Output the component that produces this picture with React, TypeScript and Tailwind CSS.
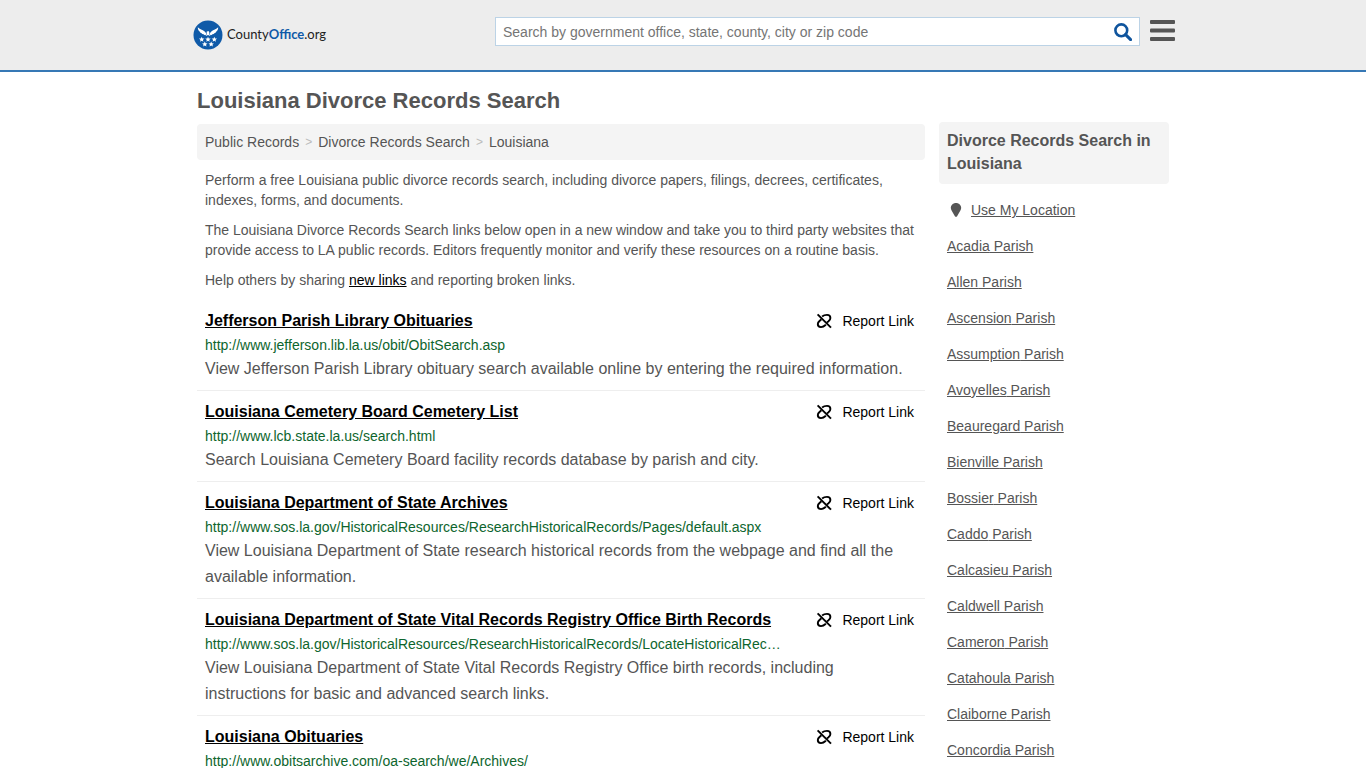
import { FC } from 'react';

interface RecordLink {
  title: string;
  url: string;
  description?: string;
}

const records: RecordLink[] = [
  {
    title: 'Jefferson Parish Library Obituaries',
    url: 'http://www.jefferson.lib.la.us/obit/ObitSearch.asp',
    description: 'View Jefferson Parish Library obituary search available online by entering the required information.',
  },
  {
    title: 'Louisiana Cemetery Board Cemetery List',
    url: 'http://www.lcb.state.la.us/search.html',
    description: 'Search Louisiana Cemetery Board facility records database by parish and city.',
  },
  {
    title: 'Louisiana Department of State Archives',
    url: 'http://www.sos.la.gov/HistoricalResources/ResearchHistoricalRecords/Pages/default.aspx',
    description:
      'View Louisiana Department of State research historical records from the webpage and find all the available information.',
  },
  {
    title: 'Louisiana Department of State Vital Records Registry Office Birth Records',
    url: 'http://www.sos.la.gov/HistoricalResources/ResearchHistoricalRecords/LocateHistoricalRec…',
    description:
      'View Louisiana Department of State Vital Records Registry Office birth records, including instructions for basic and advanced search links.',
  },
  {
    title: 'Louisiana Obituaries',
    url: 'http://www.obitsarchive.com/oa-search/we/Archives/',
  },
];

const parishes = [
  'Acadia',
  'Allen',
  'Ascension',
  'Assumption',
  'Avoyelles',
  'Beauregard',
  'Bienville',
  'Bossier',
  'Caddo',
  'Calcasieu',
  'Caldwell',
  'Cameron',
  'Catahoula',
  'Claiborne',
  'Concordia',
];

const STAR = 'M0-2.7.8-.9 2.7-.8 1.2.5 1.7 2.4 0 1.4-1.7 2.4-1.2.5-2.7-.8-.8-.9Z';

const LogoMark = () => (
  <svg viewBox="0 0 30 30" className="h-[30px] w-[30px]" aria-hidden="true">
    <circle cx="15" cy="15" r="14.5" fill="#0f5aa8" />
    <g fill="#fff">
      {/* eagle: left wing, right wing, body */}
      <path d="M4.8 7.2C6.6 9.2 9.6 9.8 11.4 11.2 12.3 12 12.9 12.8 13.4 13.5L12.6 15.2C11.7 15.2 11 14.8 10.6 14.2 9.7 14.3 9 13.9 8.6 13.2 7.7 13.1 7.1 12.6 6.9 11.8 5.6 10.8 4.8 9.2 4.8 7.2Z" />
      <path d="M25.2 7.2C23.4 9.2 20.4 9.8 18.6 11.2 17.7 12 17.1 12.8 16.6 13.5L17.4 15.2C18.3 15.2 19 14.8 19.4 14.2 20.3 14.3 21 13.9 21.4 13.2 22.3 13.1 22.9 12.6 23.1 11.8 24.4 10.8 25.2 9.2 25.2 7.2Z" />
      <path d="M13.6 11.7 15.3 11.1 16.3 12.1 16.2 13.8 17.2 15.9 15 15.1 12.8 15.9 13.8 13.8Z" />
      <path d={STAR} transform="translate(8.7 19.4)" />
      <path d={STAR} transform="translate(15 19.4)" />
      <path d={STAR} transform="translate(21.3 19.4)" />
      <path d={STAR} transform="translate(11.8 24.2)" />
      <path d={STAR} transform="translate(18.2 24.2)" />
    </g>
  </svg>
);

const SearchIcon = () => (
  <svg viewBox="0 0 18 18" className="h-[18px] w-[18px]" fill="none" stroke="#0f549d" aria-hidden="true">
    <circle cx="7.3" cy="7.3" r="5.9" strokeWidth="2.6" />
    <path d="M11.6 11.6 16.6 16.6" strokeWidth="3" strokeLinecap="round" />
  </svg>
);

const MenuIcon = () => (
  <svg viewBox="0 0 25 22" className="h-[22px] w-[25px]" fill="#555" aria-hidden="true">
    <rect x="0" y="0" width="25" height="4" rx="1" />
    <rect x="0" y="8.5" width="25" height="4" rx="1" />
    <rect x="0" y="17" width="25" height="4" rx="1" />
  </svg>
);

const BrokenLinkIcon = () => (
  <svg viewBox="0 0 16 16" className="h-4 w-4" fill="none" stroke="#000" strokeWidth="1.9" aria-hidden="true">
    <path d="M1.6 1.3 15 14.7" />
    <path d="M6.1 3.6C8 2 9.4 1.9 11 1.9 13 1.9 14.4 3.2 14.4 5.1 14.4 6.5 13.6 7.4 12.5 8.3L11 9.4" />
    <path d="M5.4 6.3 3.5 8C2.4 9 1.8 9.8 1.8 11 1.8 12.9 3.2 14.1 5 14.1 6.6 14.1 7.7 13.7 9.9 11.7" />
  </svg>
);

const PinIcon = () => (
  <svg viewBox="0 0 12 16" className="h-4 w-3" fill="#555" aria-hidden="true">
    <path d="M6 1C3 1 .8 3.2.8 6 .8 8.4 3.4 11.2 4.9 14.2 5.3 15 6.7 15 7.1 14.2 8.6 11.2 11.2 8.4 11.2 6 11.2 3.2 9 1 6 1Z" />
  </svg>
);

const Header: FC = () => (
  <header className="border-b-2 border-[#3678b5] bg-[#ededed]">
    <div className="mx-auto flex h-[70px] max-w-[984px] items-start justify-between gap-4">
      <a href="#" className="mt-5 flex items-center gap-1 pl-[2px] font-['Lato',sans-serif] text-[13px] text-[#222]">
        <LogoMark />
        <span>
          County<span className="font-bold text-[#0f5aa8]">Office</span>
          <span>.org</span>
        </span>
      </a>
      <div className="flex w-full max-w-[680px] items-start gap-[10px]">
        <form className="mt-[17px] flex h-[29px] grow items-center border border-[#bcd3e6] bg-white pr-[7px]">
          <input
            type="text"
            aria-label="Search"
            placeholder="Search by government office, state, county, city or zip code"
            className="min-w-0 grow px-[7px] text-sm outline-none placeholder:text-[#757575]"
          />
          <button type="submit" aria-label="Submit search">
            <SearchIcon />
          </button>
        </form>
        <button type="button" aria-label="Menu" className="mt-5">
          <MenuIcon />
        </button>
      </div>
    </div>
  </header>
);

const RecordItem: FC<{ record: RecordLink }> = ({ record }) => (
  <li className="border-b border-[#eee] pt-[9px] pr-[11px] pb-2 pl-2">
    <div className="flex justify-between gap-4">
      <a href="#" className="leading-6 font-bold text-black underline">
        {record.title}
      </a>
      <a href="#" className="flex shrink-0 items-center gap-[10px] text-sm leading-6 text-black">
        <BrokenLinkIcon />
        Report Link
      </a>
    </div>
    <p className="mt-[2px] truncate text-sm leading-[21px] text-[#0d652d]">{record.url}</p>
    {record.description && <p className="leading-[26px]">{record.description}</p>}
  </li>
);

const Sidebar: FC = () => (
  <aside className="w-[230px] shrink-0 pt-[50px]">
    <h2 className="rounded bg-[#f4f4f4] px-2 pt-[7px] pb-[9px] leading-[23px] font-bold">
      Divorce Records Search in Louisiana
    </h2>
    <ul className="mt-2 px-2 text-sm leading-9">
      <li className="flex items-center gap-[9px] pl-[3px]">
        <PinIcon />
        <a href="#" className="underline">
          Use My Location
        </a>
      </li>
      {parishes.map((parish) => (
        <li key={parish}>
          <a href="#" className="underline">
            {parish} Parish
          </a>
        </li>
      ))}
    </ul>
  </aside>
);

const App: FC = () => {
  return (
    <div className="min-h-screen bg-white font-['Liberation_Sans',Arial,sans-serif] text-base text-[#555]">
      <Header />
      <div className="mx-auto flex max-w-[972px] gap-[14px]">
        <main className="min-w-0 grow">
          <h1 className="mt-[17px] mb-[11px] text-[22px] leading-6 font-bold">Louisiana Divorce Records Search</h1>

          <nav aria-label="Breadcrumb" className="flex items-center gap-[6px] rounded bg-[#f4f4f4] px-2 text-sm leading-9">
            <a href="#">Public Records</a>
            <span className="text-xs text-[#bbb]">&gt;</span>
            <a href="#">Divorce Records Search</a>
            <span className="text-xs text-[#bbb]">&gt;</span>
            <span>Louisiana</span>
          </nav>

          <div className="space-y-[10px] px-2 py-[10px] text-sm leading-5">
            <p>
              Perform a free Louisiana public divorce records search, including divorce papers, filings, decrees,
              certificates, indexes, forms, and documents.
            </p>
            <p>
              The Louisiana Divorce Records Search links below open in a new window and take you to third party websites
              that provide access to LA public records. Editors frequently monitor and verify these resources on a
              routine basis.
            </p>
            <p>
              Help others by sharing{' '}
              <a href="#" className="text-black underline">
                new links
              </a>{' '}
              and reporting broken links.
            </p>
          </div>

          <ul>
            {records.map((record) => (
              <RecordItem key={record.title} record={record} />
            ))}
          </ul>
        </main>
        <Sidebar />
      </div>
    </div>
  );
};

export default App;
